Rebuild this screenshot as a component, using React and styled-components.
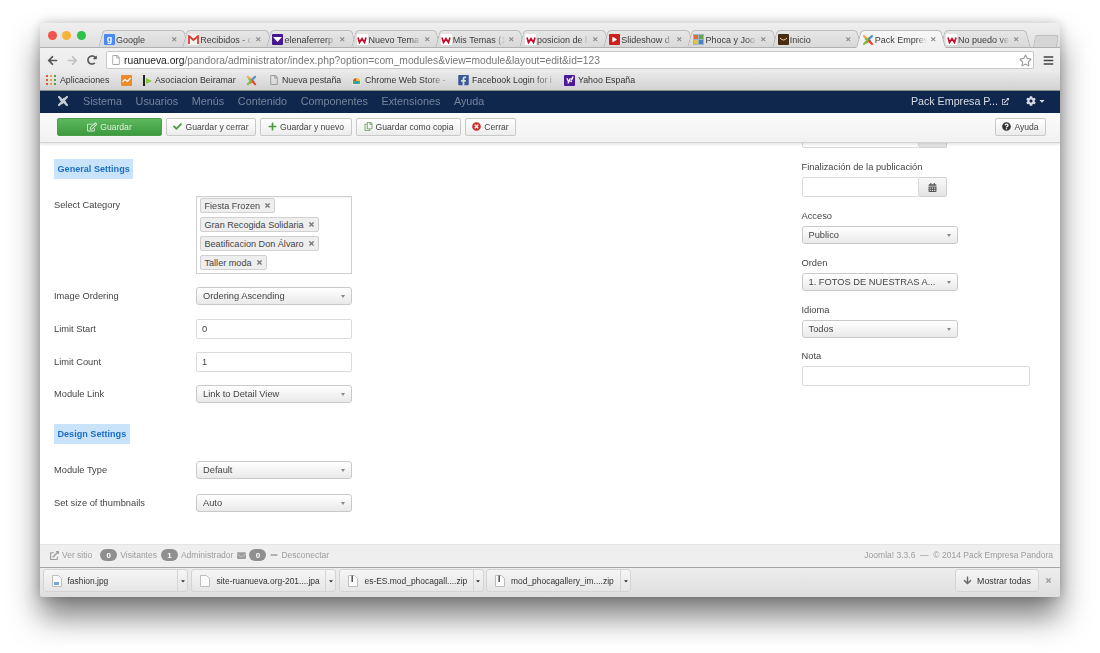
import { createGlobalStyle, styled } from 'styled-components';
import {
  FaArrowLeft, FaArrowRight, FaRedoAlt, FaBars, FaRegEdit, FaCheck, FaPlus, FaRegCopy,
  FaTimesCircle, FaQuestionCircle, FaCog, FaCaretDown, FaTimes, FaCalendarAlt,
  FaEnvelope, FaMinus, FaArrowDown, FaFacebookSquare, FaYahoo, FaRegFile, FaRegStar,
  FaExternalLinkAlt, FaPlay,
} from 'react-icons/fa';

const GlobalStyle = createGlobalStyle`
  html, body {
    margin: 0;
    background: #fff;
    font-family: "Liberation Sans", Arial, sans-serif;
  }
`;

const Page = styled.div`
  width: 1100px;
  height: 653px;
  padding: 23px 40px 0;
  box-sizing: border-box;
  overflow: hidden;
`;

const Browser = styled.div`
  width: 1020px;
  height: 574px;
  display: flex;
  flex-direction: column;
  border-radius: 5px 5px 3px 3px;
  background: #fff;
  box-shadow: 0 20px 30px rgba(0, 0, 0, 0.5), 0 0 12px rgba(0, 0, 0, 0.22);
  filter: blur(0.35px);
  overflow: hidden;
`;

const TabStrip = styled.div`
  height: 25px;
  flex: none;
  display: flex;
  align-items: flex-end;
  background: linear-gradient(#efefef, #dfdfdf);
  border-bottom: 1px solid #b0b0b0;
  box-sizing: border-box;
`;

const Lights = styled.div`
  width: 58px;
  height: 100%;
  display: flex;
  gap: 5.5px;
  padding: 8px 0 0 7.5px;
  box-sizing: border-box;
`;

const Light = styled.span`
  width: 9px;
  height: 9px;
  border-radius: 50%;
  background: ${({ $color }) => $color};
`;

const Tab = styled.div`
  position: relative;
  width: 90px;
  height: 18px;
  margin-right: -5.8px;
  margin-bottom: -1px;
  display: flex;
  align-items: center;
  padding: 1px 0 0 6px;
  box-sizing: border-box;
  z-index: ${({ $active }) => ($active ? 2 : 1)};

  &::before,
  &::after {
    content: '';
    position: absolute;
    top: 0;
    bottom: 0;
    width: 55%;
    box-sizing: border-box;
    border-top: 1px solid #bdbdbd;
    background: ${({ $active }) => ($active ? 'linear-gradient(#f7f7f7, #f0f0f0)' : 'linear-gradient(#e6e6e6, #d9d9d9)')};
    border-bottom: ${({ $active }) => ($active ? '1px solid #f0f0f0' : '1px solid #b0b0b0')};
    z-index: -1;
  }
  &::before {
    left: 0;
    border-left: 1px solid #b5b5b5;
    border-radius: 4px 0 0 0;
    transform-origin: bottom left;
    transform: skewX(-15deg);
  }
  &::after {
    right: 0;
    border-right: 1px solid #b5b5b5;
    border-radius: 0 4px 0 0;
    transform-origin: bottom right;
    transform: skewX(15deg);
  }
`;

const Fav = styled.span`
  width: 11px;
  height: 11px;
  flex: none;
  display: flex;
  align-items: center;
  justify-content: center;
  background: ${({ $bg }) => $bg || 'transparent'};
  color: ${({ $color }) => $color || '#fff'};
  font-size: 9px;
  font-weight: bold;
  line-height: 1;
  border-radius: 1px;
`;

const TabTitle = styled.span`
  width: 52px;
  margin-left: 1px;
  font-size: 9px;
  color: #3c3c3c;
  white-space: nowrap;
  overflow: hidden;
  mask-image: linear-gradient(to right, #000 80%, transparent);
`;

const TabClose = styled.span`
  margin-left: 3px;
  display: flex;
  color: #8c8c8c;
  font-size: 6.5px;
`;

const NewTab = styled.div`
  width: 22px;
  height: 11px;
  margin: 0 0 0 10px;
  align-self: flex-end;
  background: #d6d6d6;
  border: 1px solid #bdbdbd;
  border-bottom: none;
  border-radius: 3px 3px 0 0;
  transform: skewX(-10deg);
`;

const AddressBar = styled.div`
  height: 24px;
  flex: none;
  display: flex;
  align-items: center;
  padding-left: 2px;
  background: linear-gradient(#f1f1f1, #ebebeb);
  box-sizing: border-box;
`;

const NavIcon = styled.span`
  width: 20px;
  display: flex;
  justify-content: center;
  color: ${({ $dim }) => ($dim ? '#c0c0c0' : '#555')};
  font-size: 11px;
`;

const StarSlot = styled.span`
  width: 16px;
  display: flex;
  justify-content: center;
  color: #999;
`;

const Omnibox = styled.div`
  width: 928px;
  height: 18px;
  margin: 0 4px;
  display: flex;
  align-items: center;
  padding: 0 0 0 3px;
  background: #fff;
  border: 1px solid #c9c9c9;
  border-radius: 2px;
  box-sizing: border-box;
  font-size: 10.28px;
  color: #777;
  white-space: nowrap;
`;

const Url = styled.span`
  margin-left: 3px;
  flex: 1;
  b {
    color: #222;
    font-weight: normal;
  }
`;

const BookmarkBar = styled.div`
  height: 19px;
  flex: none;
  display: flex;
  align-items: center;
  padding: 0 0 2px 6px;
  background: linear-gradient(#e9e9e9, #d2d2d2);
  border-bottom: 1px solid #8b8b8b;
  box-sizing: border-box;
`;

const Bookmark = styled.div`
  width: ${({ $w }) => $w}px;
  flex: none;
  display: flex;
  align-items: center;
  gap: 3px;
  font-size: 8.8px;
  color: #333;
  white-space: nowrap;
  overflow: hidden;
  mask-image: ${({ $fade }) => ($fade ? 'linear-gradient(to right, #000 70%, transparent 98%)' : 'none')};
`;

const AppsGrid = styled.span`
  width: 10px;
  height: 10px;
  margin-right: 1px;
  flex: none;
  display: grid;
  grid-template-columns: repeat(3, 2px);
  gap: 2px;
  span {
    background: #d9534f;
  }
  span:nth-child(3n + 2) { background: #e8a33d; }
  span:nth-child(3n) { background: #5a9e4b; }
`;

const AdminNav = styled.div`
  height: 22px;
  flex: none;
  display: flex;
  align-items: center;
  padding: 0 14px 2px 17px;
  background: #10274d;
  font-size: 10.8px;
  color: #74849b;
  box-sizing: border-box;
`;

const Menu = styled.div`
  display: flex;
  gap: 13.6px;
  margin-left: 14px;
  flex: 1;
`;

const SiteLink = styled.div`
  display: flex;
  align-items: center;
  gap: 4px;
  color: #d7dce4;
  font-size: 10.7px;
`;

const GearMenu = styled.div`
  display: flex;
  align-items: center;
  gap: 2px;
  margin-left: 17px;
  color: #d7dce4;
  font-size: 10px;
`;

const ToolBar = styled.div`
  height: 30px;
  flex: none;
  display: flex;
  align-items: center;
  padding: 0 14px 2px 17px;
  background: linear-gradient(#fbfbfb, #f1f1f1);
  border-bottom: 1px solid #d4d4d4;
  box-shadow: 0 1px 3px rgba(0, 0, 0, 0.15);
  box-sizing: border-box;
  position: relative;
  z-index: 2;
`;

const Button = styled.div`
  width: ${({ $w }) => $w}px;
  height: 18px;
  margin-left: ${({ $push }) => ($push ? 'auto' : '0')};
  margin-right: ${({ $push }) => ($push ? '0' : '4px')};
  flex: none;
  display: flex;
  align-items: center;
  justify-content: center;
  gap: 3px;
  box-sizing: border-box;
  font-size: 8.6px;
  color: ${({ $primary }) => ($primary ? '#dff0dc' : '#444')};
  background: ${({ $primary }) => ($primary ? 'linear-gradient(#5cb85c, #3e9a3e)' : 'linear-gradient(#fff, #ececec)')};
  border: 1px solid ${({ $primary }) => ($primary ? '#4a9e4a' : '#c9c9c9')};
  border-radius: 2px;
  svg {
    flex: none;
  }
`;

const Main = styled.div`
  flex: 1;
  min-height: 0;
  display: flex;
  overflow: hidden;
  background: #fff;
  font-size: 9.3px;
  color: #444;
`;

const FormColumn = styled.div`
  width: 761.5px;
  flex: none;
  padding: 16px 0 0 14px;
  box-sizing: border-box;
`;

const SideColumn = styled.div`
  flex: 1;
  display: flex;
  flex-direction: column;
  align-items: flex-start;
`;

const SectionTag = styled.div`
  width: fit-content;
  height: 20px;
  margin-top: ${({ $top }) => $top || 0}px;
  padding: 0 3.5px;
  display: flex;
  align-items: center;
  background: #c9e3fb;
  color: #1d6fc0;
  font-weight: bold;
  font-size: 9.1px;
`;

const Row = styled.div`
  display: grid;
  grid-template-columns: 142px 156px;
  align-items: ${({ $topAlign }) => ($topAlign ? 'start' : 'center')};
  margin-top: ${({ $top }) => $top}px;
`;

const RowLabel = styled.div`
  padding-top: ${({ $topAlign }) => ($topAlign ? '4px' : '0')};
`;

const ChipBox = styled.div`
  height: 78px;
  padding: 1px 3px;
  box-sizing: border-box;
  border: 1px solid #d0d0d0;
  box-shadow: inset 0 1px 1px rgba(0, 0, 0, 0.05);
  display: flex;
  flex-direction: column;
  align-items: flex-start;
  gap: 4px;
`;

const Chip = styled.div`
  height: 15px;
  padding: 0 3px 0 3.5px;
  display: flex;
  align-items: center;
  gap: 4px;
  background: #eee;
  border: 1px solid #d0d0d0;
  border-radius: 2px;
  box-sizing: border-box;
  color: #444;
  font-size: 9.1px;
  svg {
    color: #777;
  }
`;

const Select = styled.div`
  position: relative;
  width: ${({ $w }) => $w || 156}px;
  height: 18px;
  flex: none;
  display: flex;
  align-items: center;
  padding-left: 6px;
  box-sizing: border-box;
  background: linear-gradient(#fff, #e9e9e9);
  border: 1px solid #c9c9c9;
  border-radius: 3px;
  color: #444;

  &::after {
    content: '';
    position: absolute;
    right: 6px;
    top: 6.5px;
    border: 2.5px solid transparent;
    border-top: 3.5px solid #888;
    border-bottom: none;
  }
`;

const Input = styled.div`
  width: ${({ $w }) => $w || 156}px;
  height: 20px;
  flex: none;
  display: flex;
  align-items: center;
  padding-left: 5px;
  box-sizing: border-box;
  background: #fff;
  border: 1px solid #dadada;
  border-radius: 2px;
  color: #444;
`;

const ClippedField = styled.div`
  height: 5px;
  flex: none;
  overflow: hidden;
  display: flex;
  align-items: flex-end;
`;

const DateField = styled.div`
  display: flex;
  flex: none;
`;

const CalendarButton = styled.div`
  width: 28px;
  height: 20px;
  flex: none;
  display: flex;
  align-items: center;
  justify-content: center;
  box-sizing: border-box;
  background: linear-gradient(#f8f8f8, #e4e4e4);
  border: 1px solid #d0d0d0;
  border-left: none;
  border-radius: 0 2px 2px 0;
  color: #555;
  font-size: 9px;
`;

const SideLabel = styled.div`
  margin: ${({ $top }) => $top}px 0 4.5px;
  line-height: 11px;
`;

const StatusBar = styled.div`
  height: 23px;
  flex: none;
  display: flex;
  align-items: center;
  padding: 0 7px 2px 10px;
  background: #efefef;
  border-top: 1px solid #e4e4e4;
  box-sizing: border-box;
  color: #9c9c9c;
  font-size: 8.5px;
`;

const StatusItem = styled.span`
  display: flex;
  align-items: center;
  gap: 3px;
  margin-right: ${({ $gap }) => $gap || 4}px;
`;

const Count = styled.span`
  width: 17px;
  height: 12px;
  border-radius: 7px;
  background: #8f8f8f;
  color: #fff;
  font-weight: bold;
  font-size: 8px;
  display: flex;
  align-items: center;
  justify-content: center;
`;

const Credit = styled.span`
  margin-left: auto;
`;

const DownloadBar = styled.div`
  height: 30px;
  flex: none;
  display: flex;
  align-items: center;
  padding: 0 8px 4px 2.5px;
  background: linear-gradient(#ededed, #dedede);
  border-top: 1px solid #a5a5a5;
  box-sizing: border-box;
`;

const DownloadItem = styled.div`
  width: ${({ $w }) => $w}px;
  height: 23px;
  flex: none;
  margin-right: 2.5px;
  display: flex;
  align-items: center;
  box-sizing: border-box;
  background: linear-gradient(#f5f5f5, #e6e6e6);
  border: 1px solid #d4d4d4;
  border-radius: 3px;
  font-size: 8.45px;
  color: #333;
`;

const FileName = styled.span`
  flex: 1;
  min-width: 0;
  display: flex;
  align-items: center;
  padding-left: 8px;
  gap: ${({ $gap }) => $gap}px;
  white-space: nowrap;
  overflow: hidden;
  svg {
    flex: none;
  }
`;

const Caret = styled.span`
  width: 9px;
  height: 100%;
  flex: none;
  display: flex;
  align-items: center;
  justify-content: center;
  border-left: 1px solid #d4d4d4;
  font-size: 6px;
  color: #333;
`;

const ShowAll = styled.div`
  width: 84px;
  height: 23px;
  margin-left: auto;
  display: flex;
  align-items: center;
  justify-content: center;
  gap: 5px;
  box-sizing: border-box;
  background: linear-gradient(#f5f5f5, #e6e6e6);
  border: 1px solid #d4d4d4;
  border-radius: 3px;
  font-size: 8.8px;
  color: #333;
  svg {
    color: #666;
  }
`;

const BarClose = styled.span`
  margin-left: 6px;
  display: flex;
  color: #9a9a9a;
  font-size: 7px;
`;

const JoomlaMark = ({ size = 11, colors = ['#5091cd', '#f9a541', '#f44321', '#7ac143'] }) => (
  <svg width={size} height={size} viewBox="0 0 24 24" fill="none" strokeWidth="4.4" strokeLinecap="round" strokeLinejoin="round" style={{ flex: 'none' }}>
    <path d="M4 4 L11 11 L14.5 7.5" stroke={colors[1]} />
    <path d="M20 4 L13 11 L16.5 14.5" stroke={colors[0]} />
    <path d="M20 20 L13 13 L9.5 16.5" stroke={colors[2]} />
    <path d="M4 20 L11 13 L7.5 9.5" stroke={colors[3]} />
  </svg>
);

const WebIcon = () => (
  <Fav $bg="#fff">
    <svg width="10" height="8" viewBox="0 0 20 16" fill="none" stroke="#c8102e" strokeWidth="3.4">
      <path d="M2 3 L5 13 L10 5 L15 13 L18 3" />
    </svg>
  </Fav>
);

// page shape with a dark stripe for zips, a little blue mark for images
const FileIcon = ({ kind }) => (
  <svg width="10" height="12" viewBox="0 0 10 12">
    <path d="M0.5 0.5 H6.5 L9.5 3.5 V11.5 H0.5 Z" fill="#fbfbfb" stroke="#bdbdbd" />
    {kind === 'zip' && <rect x="3.5" y="0.5" width="1.4" height="6.5" fill="#444" />}
    {kind === 'image' && <rect x="2" y="7" width="5" height="3" fill="#7da7d6" />}
  </svg>
);

const tabs = [
  { title: 'Google', icon: <Fav $bg="#4a8af4">g</Fav> },
  {
    title: 'Recibidos - c',
    icon: (
      <Fav $bg="#f2f2f2">
        <svg width="11" height="9" viewBox="0 0 22 18" fill="none" stroke="#d93a2b" strokeWidth="3.4">
          <path d="M2 18 V2 L11 10 L20 2 V18" />
        </svg>
      </Fav>
    ),
  },
  {
    title: 'elenaferrerp',
    icon: (
      <Fav $bg="#46178f">
        <svg width="9" height="5" viewBox="0 0 18 10">
          <path d="M0 0 H18 L9 10 Z" fill="#fff" />
        </svg>
      </Fav>
    ),
  },
  { title: 'Nuevo Tema', icon: <WebIcon /> },
  { title: 'Mis Temas (1', icon: <WebIcon /> },
  { title: 'posicion de l', icon: <WebIcon /> },
  {
    title: 'Slideshow d',
    icon: (
      <Fav $bg="#cd201f">
        <FaPlay size={5} />
      </Fav>
    ),
  },
  {
    title: 'Phoca y Joo',
    icon: (
      <Fav>
        <svg width="11" height="11" viewBox="0 0 11 11">
          <rect width="11" height="11" fill="#9ab7c9" />
          <rect x="1" y="1" width="4" height="4" fill="#e8663c" />
          <rect x="6" y="1" width="4" height="4" fill="#63a94b" />
          <rect x="1" y="6" width="4" height="4" fill="#e5c33c" />
          <rect x="6" y="6" width="4" height="4" fill="#4c82c4" />
        </svg>
      </Fav>
    ),
  },
  {
    title: 'Inicio',
    icon: (
      <Fav $bg="#4a2c12">
        <svg width="9" height="5" viewBox="0 0 18 10" fill="none" stroke="#e8d5b5" strokeWidth="2">
          <path d="M2 2 Q9 10 16 2" />
        </svg>
      </Fav>
    ),
  },
  { title: 'Pack Empres', active: true, icon: <JoomlaMark size={12} /> },
  { title: 'No puedo ve', icon: <WebIcon /> },
];

const bookmarks = [
  { w: 75, label: 'Aplicaciones', icon: <AppsGrid>{Array.from({ length: 9 }, (_, i) => <span key={i} />)}</AppsGrid> },
  {
    w: 20,
    label: '',
    icon: (
      <Fav $bg="#ef8a2b">
        <svg width="9" height="7" viewBox="0 0 18 14" fill="none" stroke="#fff" strokeWidth="2.4">
          <path d="M1 10 L6 5 L11 9 L17 2" />
        </svg>
      </Fav>
    ),
  },
  {
    w: 105,
    label: 'Asociacion Beiramar',
    icon: (
      <Fav>
        <svg width="11" height="11" viewBox="0 0 11 11">
          <rect x="2" y="0" width="2" height="11" fill="#222" />
          <path d="M5 3 L11 6 L5 9 Z" fill="#8cc63f" />
        </svg>
      </Fav>
    ),
  },
  { w: 22, label: '', icon: <JoomlaMark /> },
  { w: 83, label: 'Nueva pestaña', icon: <Fav $color="#999"><FaRegFile size={10} /></Fav> },
  {
    w: 107,
    label: 'Chrome Web Store -',
    fade: true,
    icon: (
      <Fav>
        <svg width="11" height="11" viewBox="0 0 11 11">
          <path d="M1 10 V6 A4.5 4.5 0 0 1 10 6 V10 Z" fill="#e5e5e5" />
          <path d="M2 6 A3.5 3.5 0 0 1 5.5 3 L5.5 6 Z" fill="#dd4b39" />
          <path d="M5.5 3 A3.5 3.5 0 0 1 9 6 L5.5 6 Z" fill="#f4c20d" />
          <rect x="2" y="6" width="7" height="3" fill="#3cba54" />
          <rect x="4" y="6" width="3" height="3" fill="#4885ed" />
        </svg>
      </Fav>
    ),
  },
  { w: 106, label: 'Facebook Login for i', fade: true, icon: <Fav $color="#3b5998"><FaFacebookSquare size={12} /></Fav> },
  { w: 80, label: 'Yahoo España', icon: <Fav $bg="#4b1a9c"><FaYahoo size={8} /></Fav> },
];

const menuItems = ['Sistema', 'Usuarios', 'Menús', 'Contenido', 'Componentes', 'Extensiones', 'Ayuda'];

const categories = ['Fiesta Frozen', 'Gran Recogida Solidaria', 'Beatificacion Don Álvaro', 'Taller moda'];

const downloads = [
  { name: 'fashion.jpg', kind: 'image', w: 145.5, gap: 6 },
  { name: 'site-ruanueva.org-201....jpa', kind: 'page', w: 145.5, gap: 7 },
  { name: 'es-ES.mod_phocagall....zip', kind: 'zip', w: 145, gap: 7 },
  { name: 'mod_phocagallery_im....zip', kind: 'zip', w: 145, gap: 6 },
];

const App = () => (
  <>
    <GlobalStyle />
    <Page>
      <Browser>
        <TabStrip>
          <Lights>
            <Light $color="#f0544c" />
            <Light $color="#f5b338" />
            <Light $color="#2fc24a" />
          </Lights>
          {tabs.map(tab => (
            <Tab key={tab.title} $active={tab.active}>
              {tab.icon}
              <TabTitle>{tab.title}</TabTitle>
              <TabClose><FaTimes /></TabClose>
            </Tab>
          ))}
          <NewTab />
        </TabStrip>

        <AddressBar>
          <NavIcon><FaArrowLeft /></NavIcon>
          <NavIcon $dim><FaArrowRight /></NavIcon>
          <NavIcon><FaRedoAlt size={10} /></NavIcon>
          <Omnibox>
            <Fav $color="#aaa"><FaRegFile size={10} /></Fav>
            <Url><b>ruanueva.org</b>/pandora/administrator/index.php?option=com_modules&amp;view=module&amp;layout=edit&amp;id=123</Url>
            <StarSlot><FaRegStar size={13} /></StarSlot>
          </Omnibox>
          <NavIcon><FaBars size={11} color="#444" /></NavIcon>
        </AddressBar>

        <BookmarkBar>
          {bookmarks.map((b, i) => (
            <Bookmark key={i} $w={b.w} $fade={b.fade}>
              {b.icon}
              {b.label}
            </Bookmark>
          ))}
        </BookmarkBar>

        <AdminNav>
          <JoomlaMark size={12} colors={['#c7ced8', '#c7ced8', '#c7ced8', '#c7ced8']} />
          <Menu>
            {menuItems.map(item => <span key={item}>{item}</span>)}
          </Menu>
          <SiteLink>Pack Empresa P... <FaExternalLinkAlt size={7} /></SiteLink>
          <GearMenu><FaCog size={10} /><FaCaretDown size={8} /></GearMenu>
        </AdminNav>

        <ToolBar>
          <Button $w={105} $primary><FaRegEdit size={10} />Guardar</Button>
          <Button $w={90}><FaCheck size={9} color="#4b9a3c" />Guardar y cerrar</Button>
          <Button $w={92}><FaPlus size={9} color="#4b9a3c" />Guardar y nuevo</Button>
          <Button $w={105}><FaRegCopy size={9} color="#6c9a5c" />Guardar como copia</Button>
          <Button $w={51}><FaTimesCircle size={9} color="#c9302c" />Cerrar</Button>
          <Button $w={51} $push><FaQuestionCircle size={9} color="#333" />Ayuda</Button>
        </ToolBar>

        <Main>
          <FormColumn>
            <SectionTag>General Settings</SectionTag>
            <Row $top={17} $topAlign>
              <RowLabel $topAlign>Select Category</RowLabel>
              <ChipBox>
                {categories.map(c => (
                  <Chip key={c}>{c}<FaTimes size={7} /></Chip>
                ))}
              </ChipBox>
            </Row>
            <Row $top={13}>
              <RowLabel>Image Ordering</RowLabel>
              <Select>Ordering Ascending</Select>
            </Row>
            <Row $top={14}>
              <RowLabel>Limit Start</RowLabel>
              <Input>0</Input>
            </Row>
            <Row $top={13}>
              <RowLabel>Limit Count</RowLabel>
              <Input>1</Input>
            </Row>
            <Row $top={13}>
              <RowLabel>Module Link</RowLabel>
              <Select>Link to Detail View</Select>
            </Row>
            <SectionTag $top={21}>Design Settings</SectionTag>
            <Row $top={17}>
              <RowLabel>Module Type</RowLabel>
              <Select>Default</Select>
            </Row>
            <Row $top={15}>
              <RowLabel>Set size of thumbnails</RowLabel>
              <Select>Auto</Select>
            </Row>
          </FormColumn>

          <SideColumn>
            <ClippedField>
              <Input $w={117} />
              <CalendarButton />
            </ClippedField>
            <SideLabel $top={13.5}>Finalización de la publicación</SideLabel>
            <DateField>
              <Input $w={117} />
              <CalendarButton><FaCalendarAlt /></CalendarButton>
            </DateField>
            <SideLabel $top={13.5}>Acceso</SideLabel>
            <Select>Publico</Select>
            <SideLabel $top={13.5}>Orden</SideLabel>
            <Select>1. FOTOS DE NUESTRAS A...</Select>
            <SideLabel $top={13.5}>Idioma</SideLabel>
            <Select>Todos</Select>
            <SideLabel $top={12.5}>Nota</SideLabel>
            <Input $w={228} />
          </SideColumn>
        </Main>

        <StatusBar>
          <StatusItem $gap={8}><FaExternalLinkAlt size={9} />Ver sitio</StatusItem>
          <StatusItem><Count>0</Count>Visitantes</StatusItem>
          <StatusItem><Count>1</Count>Administrador</StatusItem>
          <StatusItem><FaEnvelope size={9} /><Count>0</Count></StatusItem>
          <StatusItem><FaMinus size={8} />Desconectar</StatusItem>
          <Credit>Joomla! 3.3.6 &nbsp;—&nbsp; © 2014 Pack Empresa Pandora</Credit>
        </StatusBar>

        <DownloadBar>
          {downloads.map(d => (
            <DownloadItem key={d.name} $w={d.w}>
              <FileName $gap={d.gap}><FileIcon kind={d.kind} />{d.name}</FileName>
              <Caret><FaCaretDown /></Caret>
            </DownloadItem>
          ))}
          <ShowAll><FaArrowDown size={9} />Mostrar todas</ShowAll>
          <BarClose><FaTimes /></BarClose>
        </DownloadBar>
      </Browser>
    </Page>
  </>
);

export default App;
